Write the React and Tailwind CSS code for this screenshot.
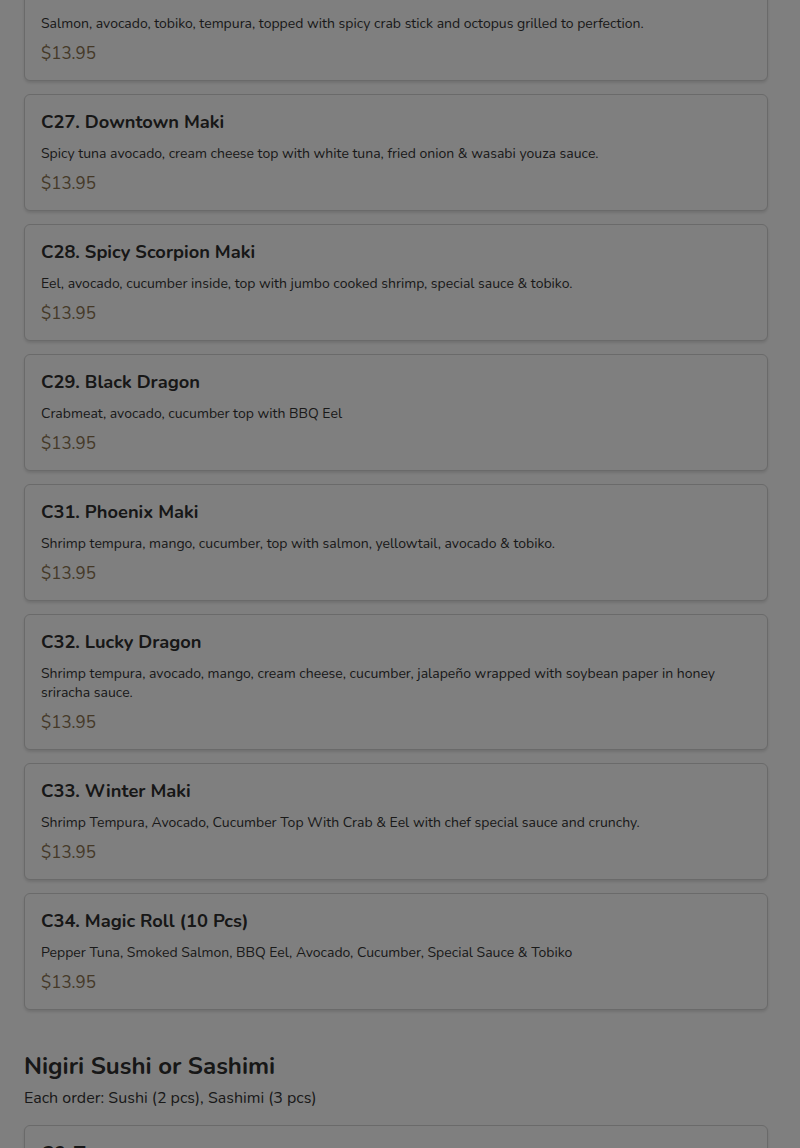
import React from "react";

const items = [
  { t: "C26. Volcano Maki", d: "Salmon, avocado, tobiko, tempura, topped with spicy crab stick and octopus grilled to perfection." },
  { t: "C27. Downtown Maki", d: "Spicy tuna avocado, cream cheese top with white tuna, fried onion & wasabi youza sauce." },
  { t: "C28. Spicy Scorpion Maki", d: "Eel, avocado, cucumber inside, top with jumbo cooked shrimp, special sauce & tobiko." },
  { t: "C29. Black Dragon", d: "Crabmeat, avocado, cucumber top with BBQ Eel" },
  { t: "C31. Phoenix Maki", d: "Shrimp tempura, mango, cucumber, top with salmon, yellowtail, avocado & tobiko." },
  { t: "C32. Lucky Dragon", d: "Shrimp tempura, avocado, mango, cream cheese, cucumber, jalapeño wrapped with soybean paper in honey sriracha sauce." },
  { t: "C33. Winter Maki", d: "Shrimp Tempura, Avocado, Cucumber Top With Crab & Eel with chef special sauce and crunchy." },
  { t: "C34. Magic Roll (10 Pcs)", d: "Pepper Tuna, Smoked Salmon, BBQ Eel, Avocado, Cucumber, Special Sauce & Tobiko" },
];

function Card({ t, d, price = "$13.95" }) {
  return (
    <div className="rounded-md border border-[#d4d4d4] bg-white px-4 pt-[17px] pb-[14px] shadow-[0_2px_3px_rgba(0,0,0,0.12)]">
      <div className="text-[18.3px] font-bold leading-[20px] text-[#2e2e2e]">{t}</div>
      <div className="mt-[12px] text-[14px] leading-[19px] text-[#333333]">{d}</div>
      <div className="mt-[9px] text-[17px] leading-[24px] text-[#8a7250]">{price}</div>
    </div>
  );
}

export default function App() {
  return (
    <div
      className="relative h-[1148px] overflow-hidden bg-white"
      style={{ fontFamily: "Nunito, Lato, 'Noto Sans', sans-serif" }}
    >
      <div className="-mt-[36px] pl-6 pr-8">
        <div className="flex flex-col gap-[13px]">
          {items.map((it) => (
            <Card key={it.t} {...it} />
          ))}
        </div>
        <h2 className="mt-[38px] text-[24px] font-bold leading-[36px] text-[#2e2e2e]">Nigiri Sushi or Sashimi</h2>
        <p className="mt-[2px] text-[16px] leading-[24px] text-[#333333]">Each order: Sushi (2 pcs), Sashimi (3 pcs)</p>
        <div className="mt-[15px] flex flex-col gap-[13px]">
          <Card t="C6. Tuna" d="Fresh tuna." />
        </div>
      </div>
      <div className="absolute inset-0 bg-black/50" />
    </div>
  );
}
